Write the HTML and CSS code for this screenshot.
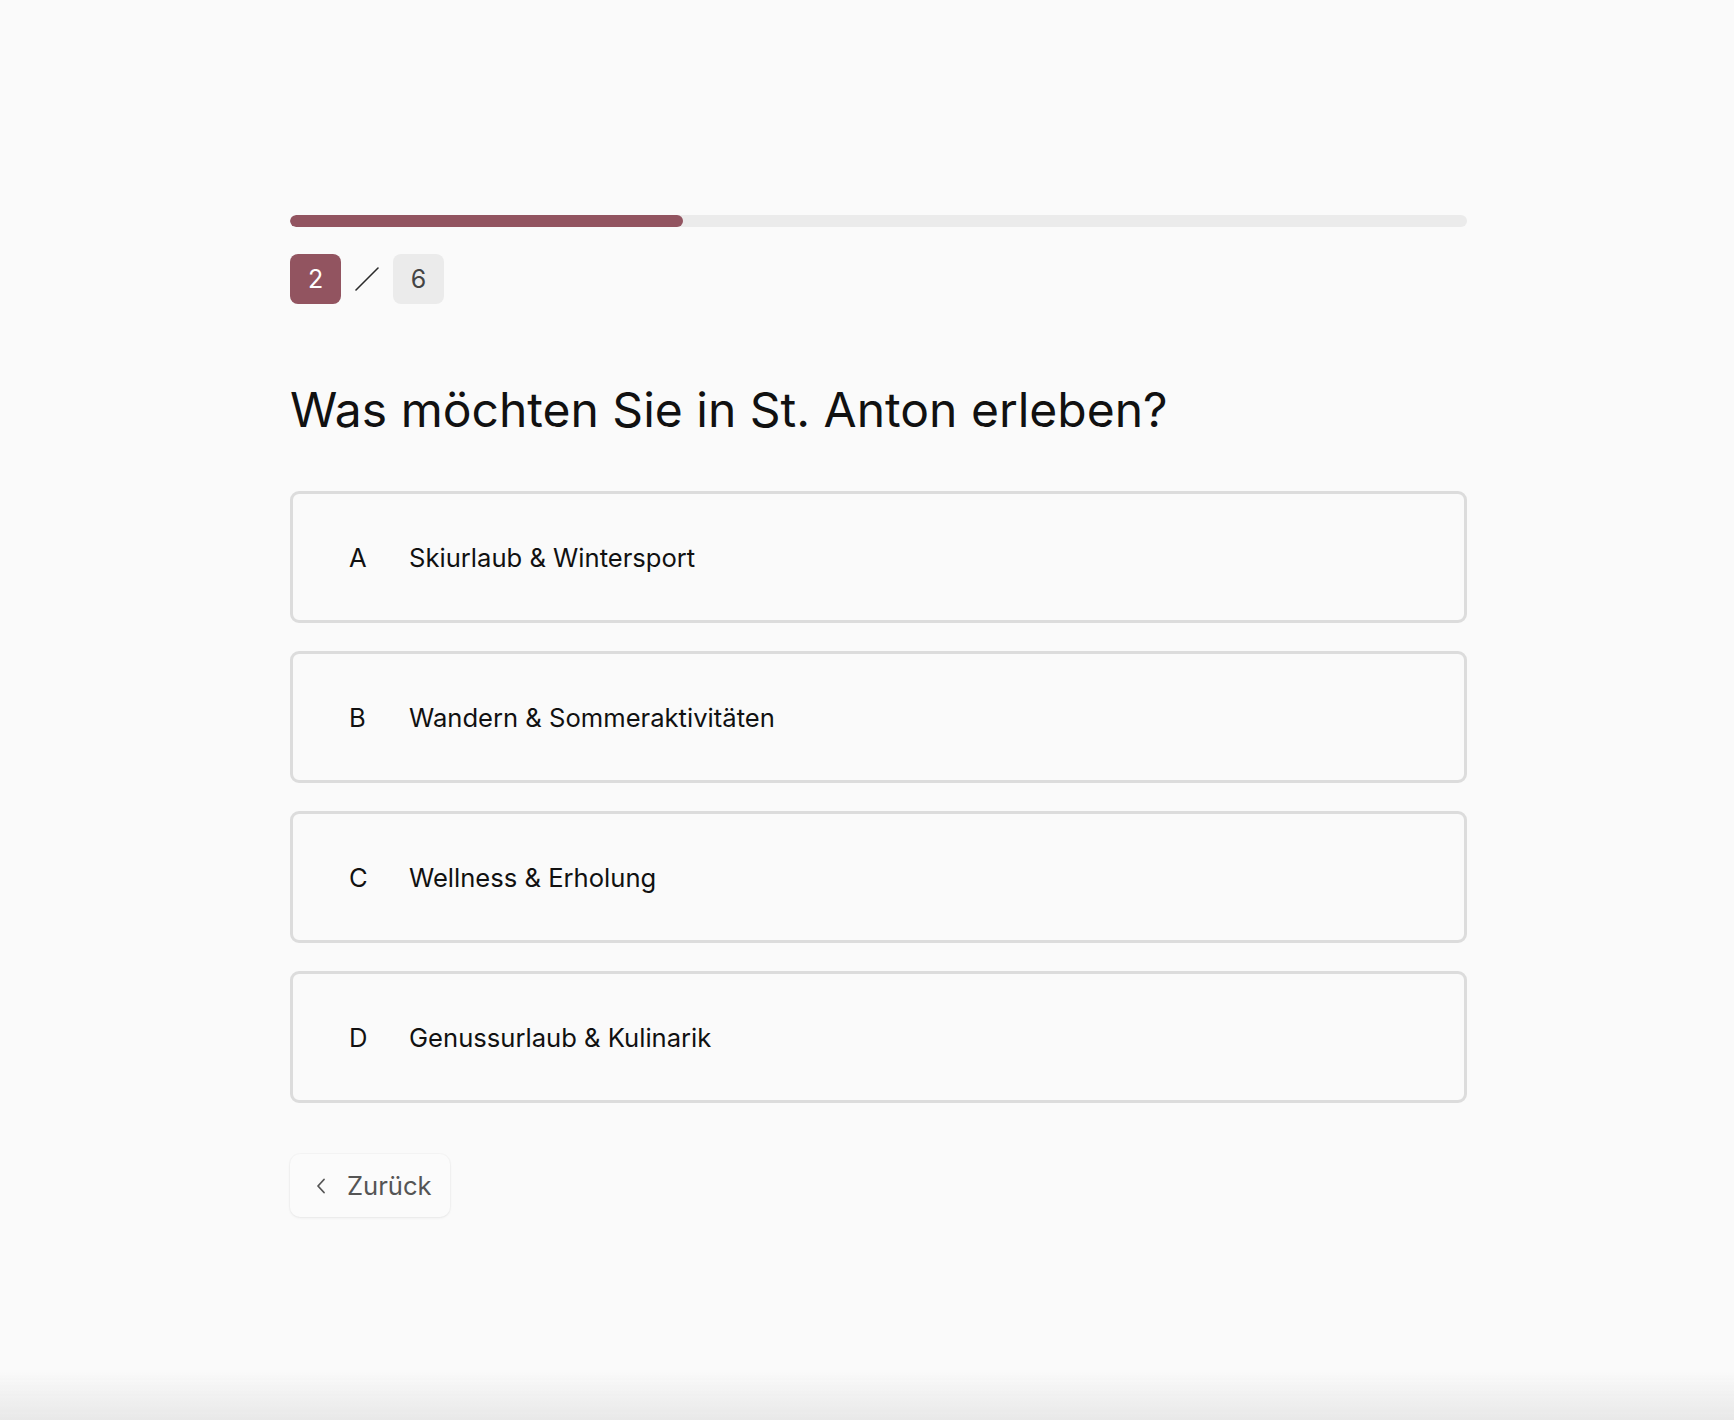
FILE: index.html
```html
<!DOCTYPE html>
<html lang="de">
<head>
<meta charset="utf-8">
<title>St. Anton Quiz</title>
<link rel="stylesheet" href="styles.css">
</head>
<body>
<main class="wrap">
  <div class="progress"><div class="progress-fill" style="width:33.4%"></div></div>
  <div class="counter">
    <span class="step step-current">2</span>
    <svg class="slash" width="24" height="24" viewBox="0 0 24 24"><line x1="1" y1="23" x2="23" y2="1" stroke="#2a2a2a" stroke-width="1.6" stroke-linecap="round"/></svg>
    <span class="step step-total">6</span>
  </div>
  <h1 class="question">Was möchten Sie in St. Anton erleben?</h1>
  <div class="options">
    <button class="option"><span class="letter">A</span><span class="label">Skiurlaub &amp; Wintersport</span></button>
    <button class="option"><span class="letter">B</span><span class="label">Wandern &amp; Sommeraktivitäten</span></button>
    <button class="option"><span class="letter">C</span><span class="label">Wellness &amp; Erholung</span></button>
    <button class="option"><span class="letter">D</span><span class="label">Genussurlaub &amp; Kulinarik</span></button>
  </div>
  <button class="back">
    <svg class="chev" width="10" height="16" viewBox="0 0 10 16"><polyline points="8,1.5 2,8 8,14.5" fill="none" stroke="#555" stroke-width="1.8" stroke-linecap="round" stroke-linejoin="round"/></svg>
    <span>Zurück</span>
  </button>
</main>
<div class="bottom-fade"></div>
</body>
</html>
```

FILE: styles.css
```css
html, body {
  margin: 0;
  padding: 0;
  background: #fafafa;
}
body {
  font-family: "Inter", "Noto Sans", sans-serif;
  color: #111;
  min-height: 1420px;
}
.wrap {
  width: 1177px;
  margin-left: 290px;
  padding-top: 215px;
}
.progress {
  height: 12px;
  border-radius: 6px;
  background: #ebebeb;
  overflow: hidden;
}
.progress-fill {
  height: 100%;
  border-radius: 6px;
  background: #925460;
}
.counter {
  display: flex;
  align-items: center;
  margin-top: 27px;
}
.step {
  width: 51px;
  height: 50px;
  border-radius: 8px;
  display: flex;
  align-items: center;
  justify-content: center;
  font-size: 25px;
}
.step-current {
  background: #925460;
  color: #fff;
}
.step-total {
  background: #ebebeb;
  color: #444;
}
.slash {
  margin: 0 14px 0 14px;
}
.question {
  margin: 77px 0 0 0;
  font-size: 48px;
  line-height: 58px;
  font-weight: 400;
  color: #111;
}
.options {
  display: flex;
  flex-direction: column;
  gap: 28px;
  margin-top: 52px;
}
.option {
  display: flex;
  align-items: center;
  height: 132px;
  box-sizing: border-box;
  border: 3px solid #dcdcdc;
  border-radius: 9px;
  background: #fafafa;
  padding: 0 0 0 56px;
  font-family: inherit;
  font-size: 25.6px;
  color: #111;
  text-align: left;
  cursor: pointer;
}
.letter {
  width: 60px;
  flex: none;
}
.back {
  margin-top: 51px;
  display: flex;
  align-items: center;
  width: 160px;
  height: 63px;
  box-sizing: border-box;
  padding: 0 0 0 26px;
  border: none;
  border-radius: 10px;
  background: #fbfbfb;
  box-shadow: 0 1px 3px rgba(0,0,0,0.06), 0 0 0 1px rgba(0,0,0,0.02);
  font-family: inherit;
  font-size: 25.6px;
  color: #555;
  cursor: pointer;
}
.chev {
  margin-right: 21px;
}
.bottom-fade {
  position: fixed;
  left: 0;
  right: 0;
  bottom: 0;
  height: 48px;
  background: linear-gradient(to bottom, rgba(234,234,234,0), #e8e8e8);
  pointer-events: none;
}
```
